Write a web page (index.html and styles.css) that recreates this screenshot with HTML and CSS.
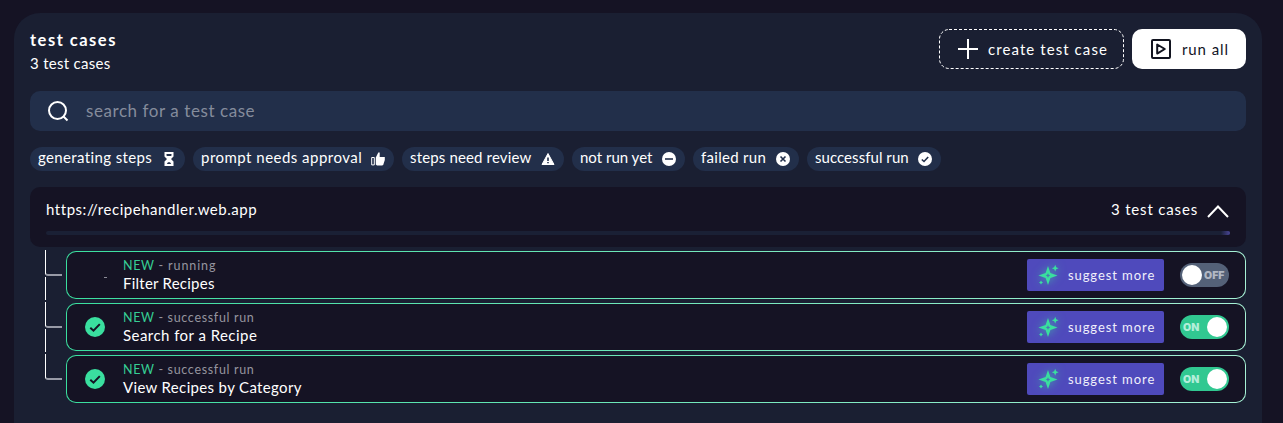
FILE: index.html
```html
<!DOCTYPE html>
<html lang="en">
<head>
<meta charset="utf-8">
<title>test cases</title>
<link rel="stylesheet" href="styles.css">
</head>
<body>
<svg class="defs" aria-hidden="true">
  <symbol id="spark" viewBox="0 0 22 22">
    <path fill-rule="evenodd" d="M10 2 12.400 9 19.500 11.500 12.400 14 10 21 7.600 14 .5 11.500 7.600 9ZM10 9.200 9.300 10.800 7.800 11.500 9.300 12.200 10 13.700 10.700 12.200 12.200 11.500 10.700 10.800Z"/>
    <path d="M17.200.8 18.200 3.200 20.600 4.200 18.200 5.200 17.200 7.600 16.200 5.200 13.800 4.200 16.200 3.200ZM3 16.500 3.800 17.700 5 18.500 3.800 19.300 3 20.500 2.200 19.300 1 18.500 2.200 17.700Z"/>
  </symbol>
  <symbol id="check" viewBox="0 0 20 20">
    <circle cx="10" cy="10" r="10"/>
    <path class="cut" d="M5.300 10.800 8.500 13.700 14.800 7.100"/>
  </symbol>
</svg>
<main class="panel">
  <header class="head">
    <div class="titles">
      <h1 class="title">test cases</h1>
      <p class="count">3 test cases</p>
    </div>
    <div class="actions">
      <button class="btn create">
        <svg class="frame" width="185" height="40" viewBox="0 0 185 40"><rect x=".5" y=".5" width="184" height="39" rx="9.500"/></svg>
        <svg width="20" height="20" viewBox="0 0 20 20" fill="none" stroke="#fff" stroke-width="2"><path d="M10 0V20M0 10H20"/></svg>
        <span class="create-text">create test case</span>
      </button>
      <button class="btn run">
        <svg width="20" height="20" viewBox="0 0 20 20" fill="none" stroke="#11131f" stroke-width="2"><rect x="1" y="1" width="18" height="18" rx="1"/><path d="M6.200 5.500V14.600L13.800 10Z" stroke-linejoin="round"/></svg>
        <span class="run-text">run all</span>
      </button>
    </div>
  </header>

  <label class="search">
    <svg width="21" height="21" viewBox="0 0 21 21" fill="none" stroke="#fff" stroke-width="2"><circle cx="9.500" cy="9.500" r="8.500"/><path d="M15.500 15.500 19.500 19.500"/></svg>
    <span class="search-text">search for a test case</span>
  </label>

  <div class="chips">
    <span class="chip c1"><span>generating steps</span><svg width="14" height="14" viewBox="0 0 14 14"><path fill="#fff" fill-rule="evenodd" d="M2.500 0H11.500V4.500L9 7 11.500 9.500V14H2.500V9.500L5 7 2.500 4.500ZM4.500 2V3.600L5 4H9L9.500 3.600V2ZM6 10.300 4.800 12H9.200L8 10.300Z"/></svg></span>
    <span class="chip c2"><span>prompt needs approval</span><svg width="14" height="14" viewBox="0 0 14 14"><path fill="none" stroke="#fff" d="M.7 5.500H3.300V12.900H.7Z"/><path fill="#fff" d="M4.800 5.600 7.300.6H8.700V5H13.800V8L12.200 13.100 11 13.500H6L4.800 12.500Z"/></svg></span>
    <span class="chip c3"><span>steps need review</span><svg width="14" height="14" viewBox="0 0 14 14"><path fill="#fff" stroke="#fff" stroke-linejoin="round" d="M7 1.500 13 12.500H1Z"/><path class="cut-dark" d="M7 5.500V9M7 10V11.200"/></svg></span>
    <span class="chip c4"><span>not run yet</span><svg width="14" height="14" viewBox="0 0 14 14"><circle cx="7" cy="7" r="7" fill="#fff"/><path class="cut-dark" d="M3 7H11"/></svg></span>
    <span class="chip c5"><span>failed run</span><svg width="14" height="14" viewBox="0 0 14 14"><circle cx="7" cy="7" r="7" fill="#fff"/><path class="cut-dark" d="M4.500 4.500 9.500 9.500M9.500 4.500 4.500 9.500"/></svg></span>
    <span class="chip c6"><span>successful run</span><svg width="14" height="14" viewBox="0 0 14 14"><circle cx="7" cy="7" r="7" fill="#fff"/><path class="cut-dark" d="M3.800 7.500 6 9.500 10.200 5"/></svg></span>
  </div>

  <section class="group">
    <div class="group-row">
      <span class="url">https://recipehandler.web.app</span>
      <span class="group-count">3 test cases</span>
      <svg width="22" height="13" viewBox="0 0 22 13" fill="none" stroke="#fff" stroke-width="2"><path d="M1 12 11 1.500 21 12"/></svg>
    </div>
    <div class="progress"><i></i></div>
  </section>

  <ul class="cases">
    <li class="case">
      <div class="branch"><i class="elbow"></i><i class="stem"></i></div>
      <article class="card">
        <div class="status"><i class="spinner"></i></div>
        <div class="info"><p class="meta"><b>NEW</b> <span class="m-run">- running</span></p><h2 class="name n1">Filter Recipes</h2></div>
        <button class="suggest"><svg class="spark" width="22" height="22"><use href="#spark"/></svg><span>suggest more</span></button>
        <div class="toggle off"><i class="knob"></i><span>OFF</span></div>
      </article>
    </li>
    <li class="case">
      <div class="branch"><i class="elbow"></i><i class="stem"></i></div>
      <article class="card">
        <div class="status"><svg class="ok" width="20" height="20"><use href="#check"/></svg></div>
        <div class="info"><p class="meta"><b>NEW</b> <span>- successful run</span></p><h2 class="name n2">Search for a Recipe</h2></div>
        <button class="suggest"><svg class="spark" width="22" height="22"><use href="#spark"/></svg><span>suggest more</span></button>
        <div class="toggle on"><span>ON</span><i class="knob"></i></div>
      </article>
    </li>
    <li class="case">
      <div class="branch"><i class="elbow"></i></div>
      <article class="card">
        <div class="status"><svg class="ok" width="20" height="20"><use href="#check"/></svg></div>
        <div class="info"><p class="meta"><b>NEW</b> <span>- successful run</span></p><h2 class="name n3">View Recipes by Category</h2></div>
        <button class="suggest"><svg class="spark" width="22" height="22"><use href="#spark"/></svg><span>suggest more</span></button>
        <div class="toggle on"><span>ON</span><i class="knob"></i></div>
      </article>
    </li>
  </ul>
</main>
</body>
</html>
```
FILE: styles.css
```css
* { box-sizing: border-box; margin: 0; padding: 0; }
body {
  height: 423px;
  padding: 13px 21px 0 14px;
  background: #151324;
  color: #fff;
  font-family: Lato, "Open Sans", sans-serif;
  font-size: 15px;
  font-variant-ligatures: none;
}
svg { display: block; flex: none; }
button { border: 0; background: none; color: inherit; font: inherit; white-space: nowrap; }
.defs { width: 0; height: 0; position: absolute; }
.panel {
  height: 410px;
  padding: 16px;
  border-radius: 26px 26px 0 0;
  background: #1a1f32;
}
.head { display: flex; justify-content: space-between; height: 40px; }
.title { font-size: 16.500px; line-height: 22px; font-weight: 700; letter-spacing: 1.500px; }
.count { margin-top: 2px; line-height: 20px; letter-spacing: .3px; }
.actions { display: flex; gap: 8px; }
.btn { display: flex; align-items: center; height: 40px; border-radius: 10px; position: relative; }
.btn > span { padding-bottom: 1px; }
.create { width: 185px; padding-left: 19px; gap: 10px; }
.create-text { letter-spacing: 1.080px; }
.frame { position: absolute; left: 0; top: 0; }
.frame rect { fill: none; stroke: #fff; stroke-dasharray: 3 2; }
.run { width: 114px; padding-left: 19px; gap: 11px; background: #fff; color: #11131f; }
.run-text { letter-spacing: .9px; }
.search {
  display: flex; align-items: center; gap: 17px;
  height: 40px; margin-top: 22px; padding-left: 18px;
  border-radius: 10px; background: #222f4a;
}
.search-text { padding-bottom: 1px; color: #858c9c; font-size: 17px; letter-spacing: .570px; }
.chips { display: flex; gap: 8px; margin-top: 16px; }
.chip {
  display: flex; align-items: center; justify-content: space-between;
  height: 24px; padding: 0 9px 0 8px; border-radius: 12px;
  background: #222f4a; white-space: nowrap; line-height: 22px;
}
.chip > span { margin-top: -4px; }
.c1 { width: 155px; letter-spacing: .370px; }
.c2 { width: 201px; letter-spacing: .480px; }
.c3 { width: 162px; letter-spacing: .150px; }
.c4 { width: 113px; }
.c5 { width: 106px; letter-spacing: .3px; }
.c6 { width: 134px; letter-spacing: .050px; }
.cut-dark { fill: none; stroke: #222f4a; stroke-width: 1.600; }
.group { height: 60px; margin-top: 16px; padding: 12px 16px; border-radius: 10px; background: #151324; }
.group-row { display: flex; align-items: center; height: 22px; }
.group-row span { margin-top: -2px; }
.url { flex: 1; letter-spacing: .540px; }
.group-count { margin-right: 9px; letter-spacing: .830px; }
.group-row svg { margin: 3px 1px 0 0; }
.progress { display: flex; justify-content: flex-end; height: 4px; margin-top: 10px; border-radius: 2px; background: #1a2035; overflow: hidden; }
.progress i { width: 9px; background: linear-gradient(90deg, #1a2035, #4a4698); }
.cases { margin-top: 4px; list-style: none; }
.case { display: flex; height: 52px; }
.branch { width: 36px; margin-top: -1px; padding-left: 15px; }
.elbow { display: block; width: 17px; height: 26px; border: solid #fff; border-width: 0 0 2px 1px; border-bottom-color: #989aa6; border-bottom-left-radius: 3px; }
.stem { display: block; width: 1px; height: 23px; margin-top: 1px; background: #fff; }
.card {
  display: flex; align-items: center; flex: 1; height: 48px; padding-right: 16px;
  border: 1px solid transparent; border-radius: 10px;
  background: linear-gradient(#151324, #151324) padding-box, linear-gradient(90deg, #3adf9f, #a6f1d5) border-box;
}
.status { display: flex; justify-content: center; width: 56px; }
.spinner { width: 3px; height: 1px; margin: 4px 0 0 20px; background: #8d8d98; }
.ok { fill: #3adf9f; }
.cut { fill: none; stroke: #151324; stroke-width: 2; }
.info { flex: 1; padding-bottom: 3px; }
.meta { line-height: 19px; font-size: 12.500px; letter-spacing: .670px; color: #95959f; }
.m-run { letter-spacing: .9px; }
.meta b { font-weight: 400; color: #36ce94; }
.name { font-size: 15px; line-height: 17px; font-weight: 400; }
.n1 { letter-spacing: .240px; }
.n2 { letter-spacing: .450px; }
.n3 { letter-spacing: .340px; }
.suggest { display: flex; align-items: center; gap: 8px; width: 137px; height: 32px; padding-left: 11px; border-radius: 2px; background: #4f4abc; font-size: 13px; letter-spacing: .920px; color: #f0effb; }
.suggest span { padding-bottom: 1px; }
.spark { fill: #3adf9f; filter: drop-shadow(0 0 4px #3adf9faa); overflow: visible; }
.toggle { display: flex; align-items: center; width: 49px; height: 24px; margin-left: 16px; border-radius: 12px; font-family: Inter, sans-serif; font-size: 11px; font-weight: 900; }
.toggle.off { padding-left: 2px; gap: 2px; background: #546178; color: #b1b7c3; }
.toggle.on { padding: 0 2px 0 3px; justify-content: space-between; background: #31c891; color: #b2eed9; }
.toggle span { font-size: 10.500px; }
.knob { width: 20px; height: 20px; border-radius: 50%; background: #fff; }
```
